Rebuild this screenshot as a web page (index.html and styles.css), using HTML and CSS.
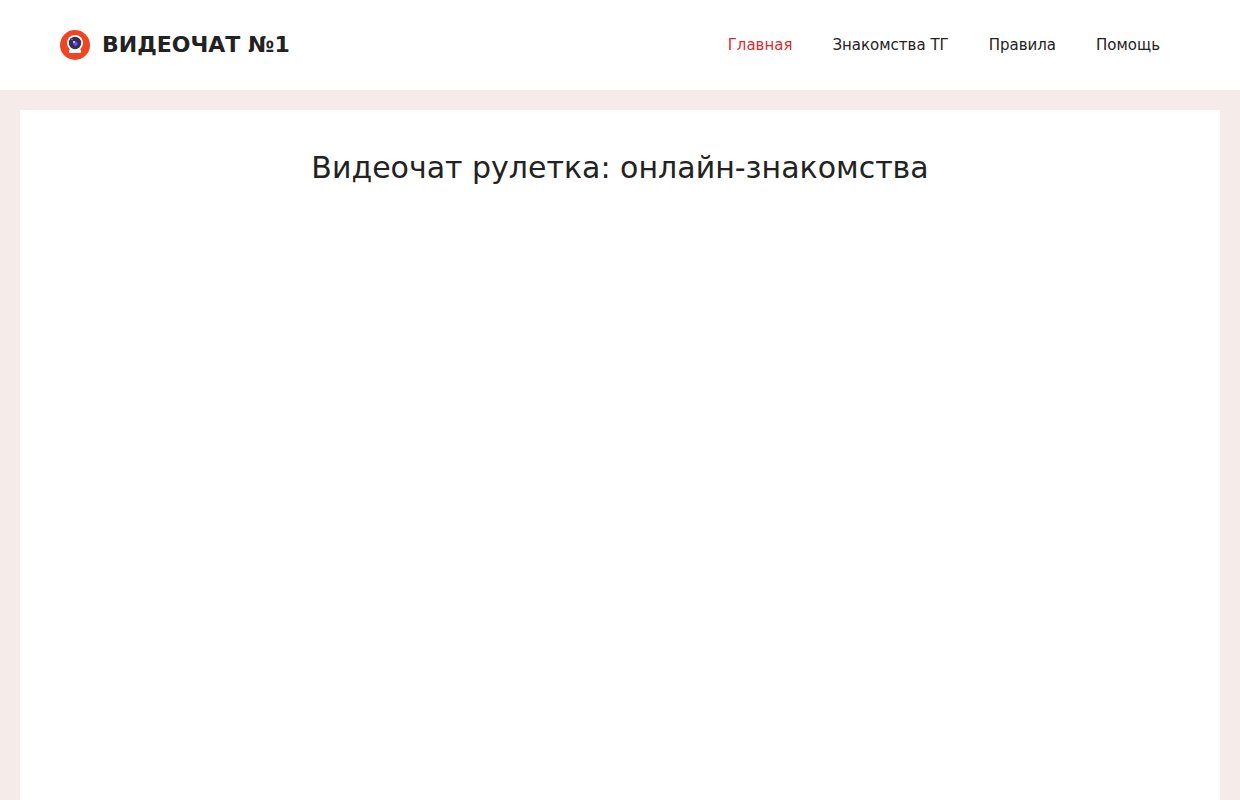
FILE: index.html
```html
<!DOCTYPE html>
<html lang="ru">
<head>
    <meta charset="UTF-8">
    <meta name="viewport" content="width=device-width, initial-scale=1">
    <title>Видеочат рулетка</title>
    <link rel="stylesheet" href="styles.css">
</head>
<body>
<header class="site-header">
    <div class="inside-header">
        <a class="site-branding" href="#">
            <svg class="site-logo" viewBox="0 0 30 30" aria-hidden="true">
                <circle cx="15" cy="15" r="15" fill="#f04523"/>
                <path d="M10 18.5h10l1 2.5q.6 2-1 2h-10q-1.600 0-1-2z" fill="#fff"/>
                <circle cx="15" cy="13" r="8" fill="#fff"/>
                <circle cx="15" cy="13" r="6.200" fill="#303440"/>
                <circle cx="15" cy="13" r="3.800" fill="#37208c"/>
                <circle cx="15.300" cy="13.600" r="2.300" fill="#7440e0"/>
                <circle cx="14" cy="12" r=".900" fill="#fff"/>
                <circle cx="16" cy="14" r=".500" fill="#d8c6ff"/>
                <circle cx="12" cy="9.500" r=".700" fill="#8c93a3"/>
            </svg>
            <span class="main-title">ВИДЕОЧАТ №1</span>
        </a>
        <nav class="main-nav">
            <a class="active" href="#">Главная</a>
            <a href="#">Знакомства ТГ</a>
            <a href="#">Правила</a>
            <a href="#">Помощь</a>
        </nav>
    </div>
</header>
<main class="site-content">
    <article class="inside-article">
        <h1>Видеочат рулетка: онлайн-знакомства</h1>
    </article>
</main>
</body>
</html>
```

FILE: styles.css
```css
* {
    box-sizing: border-box;
}
body {
    display: flex;
    flex-direction: column;
    min-height: 100vh;
    margin: 0;
    font-family: "DejaVu Sans", sans-serif;
    color: #222;
    background-color: #f5ecea; /* Light pink */
}
a {
    color: inherit;
    text-decoration: none;
}
.site-header {
    background-color: #fff;
}
.inside-header {
    display: flex;
    align-items: center;
    justify-content: space-between;
    max-width: 1200px;
    margin: 0 auto;
    padding: 15px 40px;
}
.site-branding {
    display: flex;
    align-items: center;
    gap: 12px;
}
.site-logo {
    width: 30px;
    height: 30px;
}
.main-title {
    font-size: 22px;
    font-weight: bold;
    line-height: 30px;
}
.main-nav {
    display: flex;
}
.main-nav a {
    padding: 0 20px;
    font-size: 15px;
    line-height: 60px;
}
.main-nav a:hover,
.main-nav .active {
    color: #d32f2f; /* Red */
}
.site-content {
    display: flex;
    flex: 1;
    width: 100%;
    max-width: 1240px;
    margin: 0 auto;
    padding: 20px 20px 0;
}
.inside-article {
    flex: 1;
    padding: 40px;
    background-color: #fff;
}
h1 {
    margin: 0;
    font-size: 30px;
    font-weight: normal;
    line-height: 36px;
    text-align: center;
}
```
